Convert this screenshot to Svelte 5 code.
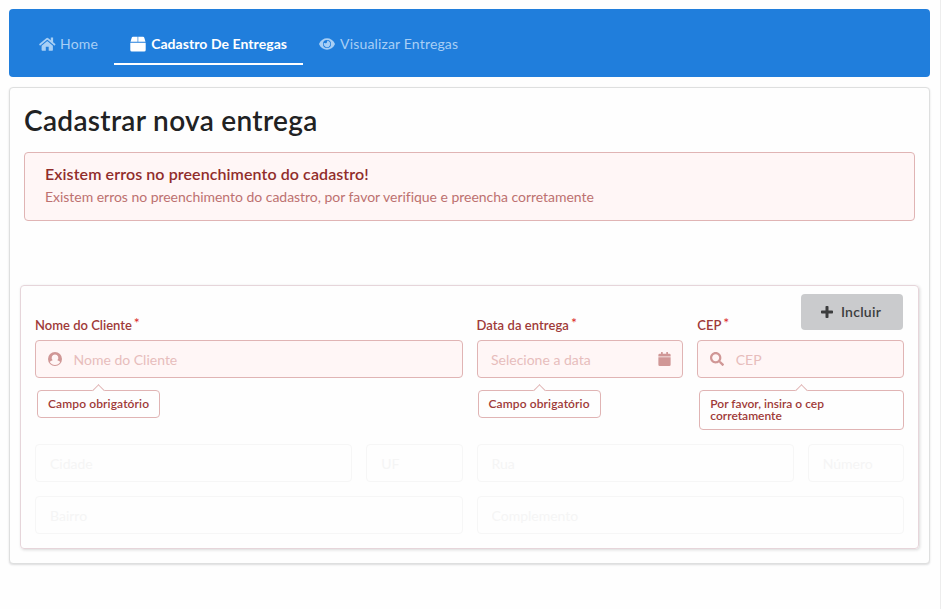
<script>
  const links = [
    { label: 'Home', icon: 'home' },
    { label: 'Cadastro De Entregas', icon: 'box', active: true },
    { label: 'Visualizar Entregas', icon: 'eye' }
  ];
  const address = [
    [
      { label: 'Cidade', span: 3 },
      { label: 'UF', span: 1 },
      { label: 'Rua', span: 3 },
      { label: 'Número', span: 1 }
    ],
    [
      { label: 'Bairro', span: 4 },
      { label: 'Complemento', span: 4 }
    ]
  ];
</script>

{#snippet icon(name)}
  {#if name === 'home'}
    <svg class="glyph home" viewBox="0 0 17 16" width="17" height="16"><path d="M8 5.300 2.600 9.700V14q0 .7.7.7h3.500v-4h2.900v4h3.500q.7 0 .7-.7V9.700L8.600 5.300q-.3-.2-.6 0ZM16.300 8l-2.200-1.800V1.600h-2.300v2.700L9.300 2.200q-1-.8-2 0L.3 8q-.3.300-.1.600l.6.800q.3.300.6 0L7.900 4q.4-.3.8 0l6.500 5.400q.3.300.6 0l.6-.8q.2-.3-.1-.6Z"/></svg>
  {:else if name === 'box'}
    <svg class="glyph" viewBox="0 0 16 16" width="16" height="16"><path d="M3 .8h4.400v5H.5L1.700 1.800Q2 .8 3 .8Zm5.300 0h4.700q1 0 1.300 1l1.200 4H8.300ZM.3 6.700h15.400v7.200q0 1.500-1.500 1.500H1.800q-1.500 0-1.500-1.500Z"/><path d="M7.400.8h.9v5h-.9z" opacity=".55"/></svg>
  {:else if name === 'eye'}
    <svg class="glyph" viewBox="0 0 16 16" width="16" height="16"><path fill-rule="evenodd" d="M8 2.300C4.700 2.300 1.700 4.300.2 7.500q-.2.500 0 1C1.700 11.700 4.700 13.700 8 13.700s6.300-2 7.800-5.200q.2-.5 0-1C14.300 4.300 11.300 2.300 8 2.300Zm0 1.700a4 4 0 1 1 0 8 4 4 0 0 1 0-8Z"/><path d="M8 4.700a1.700 1.700 0 0 1-2.300 2.300l-.8-.1A3.300 3.300 0 1 0 8 4.700Z"/></svg>
  {:else if name === 'user'}
    <svg class="glyph" viewBox="0 0 16 16" width="14" height="14"><path fill-rule="evenodd" d="M8 0a8 8 0 1 0 0 16A8 8 0 0 0 8 0ZM8 2.800a3.800 3.800 0 0 1 2.700 6.500q2.300.4 3.300 2.200A7 7 0 0 1 8 14.900a7 7 0 0 1-6-3.400q1-1.800 3.300-2.200A3.800 3.800 0 0 1 8 2.800Z"/></svg>
  {:else if name === 'calendar'}
    <svg class="glyph" viewBox="0 0 448 512" width="13" height="14"><path d="M0 192h448v272q0 48-48 48H48q-48 0-48-48Zm448-44v16H0v-52q0-48 48-48h48V12q0-12 12-12h40q12 0 12 12v52h128V12q0-12 12-12h40q12 0 12 12v52h48q48 0 48 48Z"/></svg>
  {:else if name === 'search'}
    <svg class="glyph" viewBox="0 0 512 512" width="14" height="14"><path d="M505 442.700 405.300 343c-4.500-4.500-10.600-7-17-7H372c27.600-35.300 44-79.700 44-128C416 93.100 322.900 0 208 0S0 93.100 0 208s93.100 208 208 208c48.300 0 92.700-16.400 128-44v16.300c0 6.400 2.500 12.500 7 17l99.700 99.700c9.400 9.400 24.600 9.400 33.900 0l28.300-28.300c9.400-9.400 9.400-24.600.1-34zM208 336c-70.700 0-128-57.200-128-128 0-70.700 57.200-128 128-128 70.700 0 128 57.200 128 128 0 70.700-57.200 128-128 128z"/></svg>
  {:else}
    <svg class="glyph" viewBox="0 0 14 14" width="14" height="14"><path d="M5.500 1.800q0-.8.8-.8h1.400q.8 0 .8.800v3.700h3.700q.8 0 .8.800v1.400q0 .8-.8.800H8.500v3.700q0 .8-.8.800H6.300q-.8 0-.8-.8V8.500H1.800q-.8 0-.8-.8V6.300q0-.8.8-.8h3.700Z"/></svg>
  {/if}
{/snippet}

<div class="page">
  <nav>
    {#each links as link}
      <a class:active={link.active}>{@render icon(link.icon)}<span>{link.label}</span></a>
    {/each}
  </nav>

  <main>
    <h1>Cadastrar nova entrega</h1>
    <section class="message">
      <strong>Existem erros no preenchimento do cadastro!</strong>
      <p>Existem erros no preenchimento do cadastro, por favor verifique e preencha corretamente</p>
    </section>

    <form>
      <button type="button">{@render icon('plus')}<span>Incluir</span></button>
      <div class="row required">
        <div class="field wide">
          <label for="nome">Nome do Cliente<sup>*</sup></label>
          <div class="input left">{@render icon('user')}<input id="nome" placeholder="Nome do Cliente" /></div>
          <div class="hint">Campo obrigatório</div>
        </div>
        <div class="field date">
          <label for="data">Data da entrega<sup>*</sup></label>
          <div class="input right"><input id="data" placeholder="Selecione a data" />{@render icon('calendar')}</div>
          <div class="hint">Campo obrigatório</div>
        </div>
        <div class="field cep">
          <label for="cep">CEP<sup>*</sup></label>
          <div class="input left">{@render icon('search')}<input id="cep" placeholder="CEP" /></div>
          <div class="hint">Por favor, insira o cep corretamente</div>
        </div>
      </div>
      {#each address as row}
        <div class="row disabled">
          {#each row as field}
            <div class="input" style="grid-column: span {field.span}"><input placeholder={field.label} disabled /></div>
          {/each}
        </div>
      {/each}
    </form>
  </main>
</div>

<style>
  :global(body) { background: #fefefe; }
  * { box-sizing: border-box; }
  .page {
    height: 609px;
    padding: 9px 10px 0 9px;
    border-right: 1px solid #ededed;
    font: 14px/20px Lato, "Open Sans", sans-serif;
    color: #212223;
  }
  .glyph { display: block; flex: none; fill: currentColor; }
  nav {
    display: flex;
    height: 68px;
    padding: 14px 14px 12px;
    border-radius: 4px;
    background: #207edc;
  }
  nav a {
    display: flex;
    align-items: center;
    gap: 5px;
    padding: 2px 16px 0;
    border-bottom: 2px solid transparent;
    color: #a8cff5;
    letter-spacing: .16px;
  }
  nav a:first-child { gap: 4px; letter-spacing: .2px; }
  nav a.active { color: #fff; font-weight: 700; letter-spacing: .06px; border-color: #fff; }
  main {
    height: 477px;
    margin-top: 10px;
    padding: 13px 10px 0;
    border: 1px solid #dedfdf;
    border-radius: 4px;
    box-shadow: 0 1px 2px rgba(34, 36, 38, .15);
    background: #fefefe;
  }
  h1 { margin: 0 4px; font-size: 28px; line-height: 38px; font-weight: 600; letter-spacing: .32px; }
  .message {
    height: 69px;
    margin: 13px 4px 0;
    padding: 10px 20px;
    border: 1px solid #e0b4b4;
    border-radius: 4px;
    background: #fff6f6;
    color: #912d2b;
  }
  .message strong { display: block; font-size: 16px; line-height: 21px; font-weight: 600; letter-spacing: .09px; }
  .message p { margin: 4px 0 0; line-height: 18px; letter-spacing: -.03px; color: #bd7170; }
  form {
    position: relative;
    height: 264px;
    margin-top: 64px;
    padding: 29px 14px 0;
    border: 1px solid #e6d5da;
    border-radius: 4px;
    box-shadow: 1px 1px 3px rgba(34, 36, 38, .17);
  }
  button {
    position: absolute;
    top: 8px;
    right: 15px;
    display: flex;
    align-items: center;
    justify-content: center;
    gap: 7px;
    width: 102px;
    height: 36px;
    padding: 0 3px 1px 0;
    border: 0;
    border-radius: 4px;
    background: #cacbcd;
    color: #3c3d3e;
    font: 600 14px Lato, sans-serif;
    letter-spacing: .25px;
  }
  .row { display: grid; grid-template-columns: repeat(8, minmax(0, 1fr)); gap: 14px; }
  .required { height: 129px; align-items: start; }
  .wide { grid-column: span 4; }
  .date, .cep { grid-column: span 2; }
  label { display: block; height: 25px; font-size: 13px; line-height: 20px; font-weight: 600; color: #9f3a38; }
  .date label { letter-spacing: .06px; }
  sup { margin-left: 2px; font-size: 14px; line-height: 0; vertical-align: 2px; font-weight: 400; color: #db2828; }
  .input {
    display: flex;
    align-items: center;
    height: 38px;
    padding: 0 12px;
    border: 1px solid #e0b4b4;
    border-radius: 4px;
    background: #fff6f6;
    color: #d09796;
  }
  input {
    flex: 1;
    min-width: 0;
    height: 34px;
    padding: 0;
    border: 0;
    outline: 0;
    background: transparent;
    font: inherit;
  }
  input::placeholder { color: #e7bdbc; opacity: 1; }
  .left input { margin-left: 11.5px; }
  .right { padding: 0 11px 0 13.5px; }
  .hint {
    position: relative;
    width: fit-content;
    margin: 12px 0 0 2px;
    padding: 7px 10px;
    border: 1px solid #e0b4b4;
    border-radius: 4px;
    font-size: 12px;
    line-height: 12px;
    font-weight: 600;
    letter-spacing: .11px;
    color: #9f3a38;
  }
  .date .hint { margin-left: 1px; }
  .cep .hint { letter-spacing: 0; }
  .hint::before {
    content: "";
    position: absolute;
    top: -5px;
    left: 50%;
    width: 8px;
    height: 8px;
    margin-left: -4.5px;
    border: solid #e0b4b4;
    border-width: 1px 0 0 1px;
    background: #fefefe;
    transform: rotate(45deg);
  }
  .disabled { margin-bottom: 14px; }
  .disabled .input { padding: 0 14px; border-color: #f6f6f6; background: transparent; }
  .disabled input::placeholder { color: #f5f5f5; }
</style>
